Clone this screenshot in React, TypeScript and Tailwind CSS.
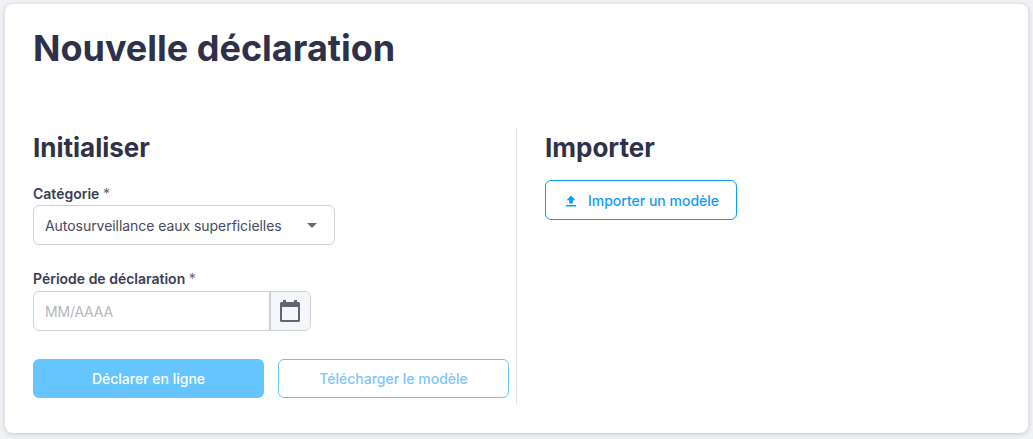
import React from 'react';

const CalendarIcon = () => (
  <svg width="22" height="24" viewBox="0 0 22 24" fill="none">
    <path d="M1 4.5C1 3.7 1.7 3 2.5 3H4V1H7V3H15V1H18V3H19.5C20.3 3 21 3.7 21 4.5V21.5C21 22.3 20.3 23 19.5 23H2.5C1.7 23 1 22.3 1 21.5V4.5ZM3 8V21H19V8H3Z" fill="#5f6672" fillRule="evenodd" />
  </svg>
);

const UploadIcon = () => (
  <svg width="12" height="12" viewBox="0 0 12 12" fill="#0d9df5">
    <path d="M6 0.5L10.5 5.2H7.8V8.4H4.2V5.2H1.5L6 0.5ZM1 10H11V11.5H1V10Z" />
  </svg>
);

const App: React.FC = () => {
  return (
    <div className="h-[439px] w-[1033px] overflow-hidden bg-[#f0f2f5] pt-1 pr-[5px] pb-[6px] pl-[5px] font-['Inter',sans-serif] text-[#2f3049]">
      <div className="h-[429px] rounded-lg bg-white pt-6 pl-7 shadow-[0_1px_5px_rgba(40,45,70,0.22)]">
        <h1 className="text-[36px] leading-[40px] font-bold">Nouvelle déclaration</h1>

        <div className="mt-[60px] flex">
          <section className="h-[277px] w-[484px] border-r border-[#e3e4e8] pt-[3px] pr-[7px]">
            <h2 className="text-[26px] leading-[34px] font-bold">Initialiser</h2>

            <label className="mt-[19px] block text-sm leading-5 font-semibold text-[#3b3d52]">
              Catégorie <span className="font-normal text-[#5f6672]">*</span>
            </label>
            <div className="mt-[1px] flex h-10 w-[302px] items-center justify-between rounded-md border border-[#cdd0d6] pt-[2px] pr-[17px] pl-[11px] text-sm tracking-[-0.05px] text-[#474a5c]">
              <span>Autosurveillance eaux superficielles</span>
              <span className="mb-[2px] h-0 w-0 border-x-[5px] border-t-[5px] border-x-transparent border-t-[#666b78]" />
            </div>

            <label className="mt-6 block text-sm leading-5 font-semibold text-[#3b3d52]">
              Période de déclaration <span className="font-normal text-[#5f6672]">*</span>
            </label>
            <div className="mt-[2px] flex h-10 w-[278px] rounded-md border border-[#cdd0d6]">
              <div className="flex flex-1 items-center pt-[2px] pl-[11px] text-sm tracking-[-0.2px] text-[#b4b6bd]">MM/AAAA</div>
              <div className="flex w-[41px] items-center justify-center rounded-r-md border-l-2 border-[#cdd0d6] bg-[#f5f6fa] pr-[2px]">
                <CalendarIcon />
              </div>
            </div>

            <div className="mt-7 flex gap-[14px]">
              <button className="h-[39px] w-[231px] rounded-md bg-[#66c4ff] text-sm font-medium text-white">
                Déclarer en ligne
              </button>
              <button className="h-[39px] w-[231px] rounded-md border border-[#66c4ff] bg-white text-sm font-medium text-[#7cc6fb]">
                Télécharger le modèle
              </button>
            </div>
          </section>

          <section className="pt-[3px] pl-7">
            <h2 className="text-[26px] leading-[34px] font-bold">Importer</h2>
            <button className="mt-[15px] flex h-10 w-[192px] items-center justify-center gap-[11px] rounded-md border border-[#0d9df5] bg-white pt-[2px] pl-[2px] text-sm font-medium text-[#0d9df5]">
              <UploadIcon />
              Importer un modèle
            </button>
          </section>
        </div>
      </div>
    </div>
  );
};

export default App;
